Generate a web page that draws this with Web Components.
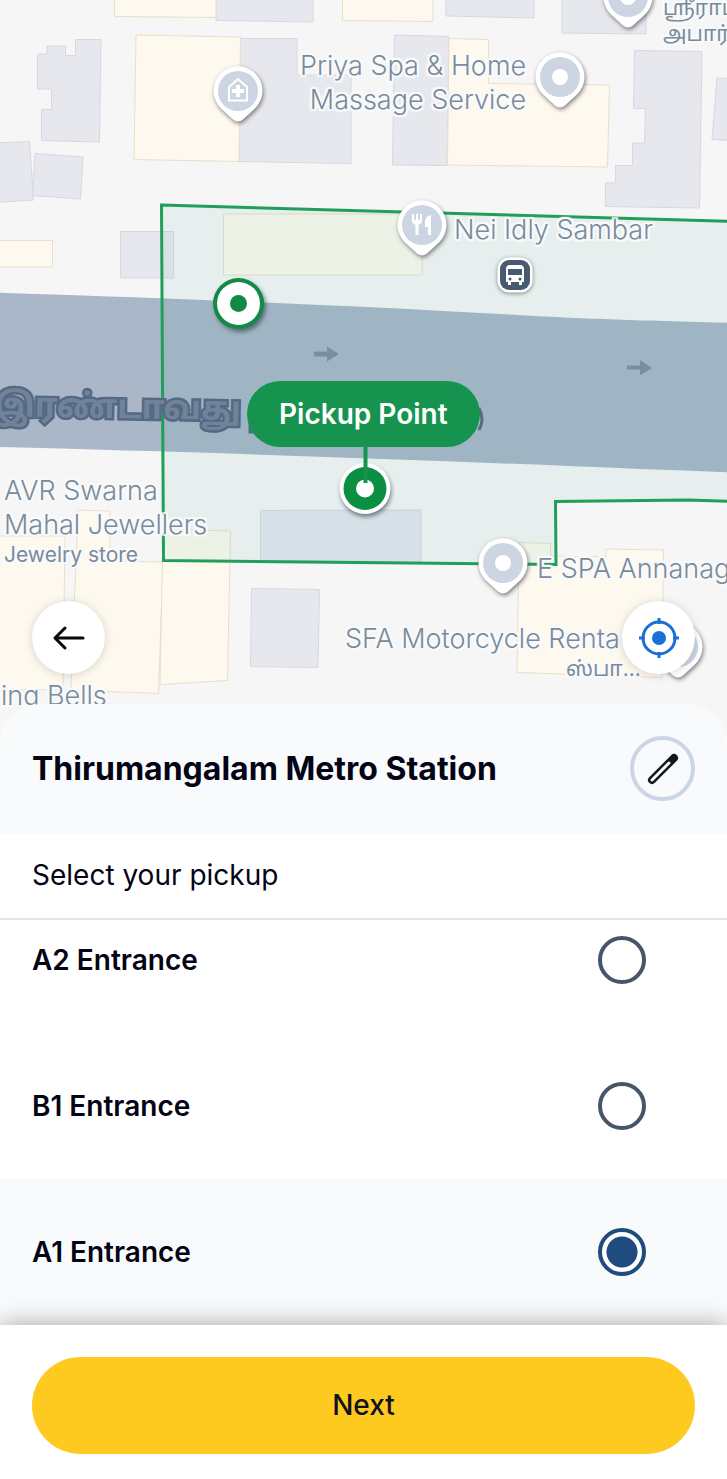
<!DOCTYPE html>
<html lang="en">
<head>
<meta charset="utf-8">
<meta name="viewport" content="width=device-width, initial-scale=1">
<title>Select pickup</title>
<style>
  body {
    margin: 0;
    font-family: Inter, "Noto Sans", "Noto Sans Tamil", sans-serif;
    color: #040415;
    background: #fff;
  }
</style>
</head>
<body>
<pickup-screen></pickup-screen>

<script>
// One place marker on the map, anchored at the centre of its disc
class MapPin extends HTMLElement {
  constructor() {
    super();
    const glyphs = {
      dot: `<circle r="8" fill="#fff"/>`,
      clinic: `
        <path d="M-9 9.500V-4L0-12L9-4V9.500Z" fill="none" stroke="#fff" stroke-width="2"/>
        <path d="M-2-6H2V-2H6V2H2V6H-2V2H-6V-2H-2Z" fill="#fff"/>`,
      food: `
        <path d="M-10-11V-5Q-10-2-8-1L-6.500 0V10H-3.500V0L-2-1Q0-2 0-5V-11H-2V-5H-4V-11H-6V-5H-8V-11Z" fill="#fff"/>
        <path d="M9-10V10H6V2H3V-4Q4-9 9-10Z" fill="#fff"/>`,
    };
    this.attachShadow({ mode: "open" }).innerHTML = `
      <style>
        :host { position: absolute; }
        svg { display: block; margin: -30px 0 0 -32px; filter: drop-shadow(1px 2px 2px rgba(60, 60, 60, .65)); }
      </style>
      <svg width="64" height="72" viewBox="-32 -30 64 72" aria-hidden="true">
        <path d="M-17 17.500A24.500 24.500 0 1 1 17 17.500L5 28.500Q0 32.500-5 28.500Z" fill="#fff"/>
        <circle r="20" fill="#cdd5e3"/>
        ${glyphs[this.getAttribute("kind")] || glyphs.dot}
      </svg>`;
    this.style.left = this.getAttribute("x") + "px";
    this.style.top = this.getAttribute("y") + "px";
  }
}

// Place name with the pale halo used on map text
class MapLabel extends HTMLElement {
  constructor() {
    super();
    this.attachShadow({ mode: "open" }).innerHTML = `
      <style>
        :host {
          position: absolute;
          font-size: 27px;
          font-weight: 350;
          line-height: 34px;
          color: #7a8a9d;
          white-space: nowrap;
          text-shadow: 2px 0 1px #f8fafa, -2px 0 1px #f8fafa, 0 2px 1px #f8fafa, 0 -2px 1px #f8fafa,
            2px 2px 1px #f8fafa, -2px -2px 1px #f8fafa, 2px -2px 1px #f8fafa, -2px 2px 1px #f8fafa;
        }
        :host([align="right"]) { text-align: right; }
        ::slotted(small) { display: block; font-size: 21px; font-weight: 400; line-height: 26px; }
      </style>
      <slot></slot>`;
    this.style.left = this.getAttribute("x") + "px";
    this.style.top = this.getAttribute("y") + "px";
  }
}

// White floating button over the map
class RoundButton extends HTMLElement {
  constructor() {
    super();
    this.attachShadow({ mode: "open" }).innerHTML = `
      <style>
        :host { display: block; }
        button {
          display: grid;
          place-items: center;
          width: 73px;
          height: 73px;
          padding: 0;
          border: 0;
          border-radius: 50%;
          background: #fff;
          box-shadow: 0 1px 10px rgba(0, 0, 0, .16);
        }
      </style>
      <button type="button" aria-label="${this.getAttribute("label")}"><slot></slot></button>`;
  }
}

class PickupMap extends HTMLElement {
  constructor() {
    super();
    this.attachShadow({ mode: "open" }).innerHTML = `
      <style>
        :host { display: block; position: relative; overflow: hidden; background: #f6f6f7; }
        .ground { display: block; position: absolute; left: 0; top: 0; }
        .road { font-size: 33px; font-weight: 700; fill: #71839b; stroke: #566982; stroke-width: 5px; paint-order: stroke; }
        .tag {
          position: absolute;
          left: 247px;
          top: 381px;
          padding: 16px 32px;
          border-radius: 33px;
          background: #16944f;
          color: #fff;
          font-size: 28px;
          font-weight: 600;
          line-height: 34px;
          white-space: nowrap;
        }
        .controls {
          position: absolute;
          left: 32px;
          right: 32px;
          bottom: 62px;
          display: flex;
          justify-content: space-between;
        }
      </style>
      <svg class="ground" width="1200" height="760" viewBox="0 0 1200 760">
        <!-- buildings -->
        <g fill="#e7e8ed" stroke="#d6d8e3">
          <path d="M216-5H313V22L216 20.500Z"/>
          <path d="M446-5H534V18L446 16Z"/>
          <path d="M562-5H646V34L562 33Z"/>
          <path d="M75.500 39.500H101L99.500 142L41.500 140.500V109.500H51.500V89H37.500V54H47V46H65.500V55.500H75.500Z"/>
          <path d="M-5 143L29.500 141.500L33.500 200L-5 202.500Z"/>
          <path d="M35 153.500L83 157L80.500 199L32.500 195.500Z"/>
          <path d="M240 38.500H297V75H351V163.500L239 161.500Z"/>
          <path d="M394.500 35L449 36.500L447 165.500L392.500 165Z"/>
          <path d="M634.500 50.500L702 51.500L699.500 208L605.500 206.500V183H615.500V165.500H632.500V143H644.500L645.500 108.500H633.500Z"/>
          <path d="M717 78L740 79V141L712 139.500Z"/>
          <path d="M120.500 231.500H173.500V278H120.500Z"/>
          <path d="M260.500 510.500L421 510V562L260.500 560.500Z" fill="#e3e6ee"/>
          <path d="M251.500 588.500L319.500 589.500L318 667.500L250.500 666.500Z"/>
        </g>
        <g fill="#fdf9ef" stroke="#e9dfca">
          <path d="M114.500-5H216V17.500L114.500 16.500Z"/>
          <path d="M342.500-5H433V21.500L342.500 20.500Z"/>
          <path d="M136 35L240.500 37L239 161.500L134 159.500Z"/>
          <path d="M449 38.500L488.500 39.500V83.500L609.500 85L607.500 167L447.500 165Z"/>
          <path d="M-5 240.500H52.500V267H-5Z"/>
          <path d="M223.500 214H422V275H223.500Z"/>
          <path d="M-5 536H65L63 690H-5Z"/>
          <path d="M78 510L110 511V561L163 562L158.500 693.500L71 690Z"/>
          <path d="M163 529L230.500 531L227.500 680.500L160 684.500Z"/>
          <path d="M519 542.500L550.500 543.500V556L606 557V549L663.500 550L662 677.500L517 672.500Z"/>
        </g>
        <!-- road -->
        <path d="M-5 292.500C200 299 360 306 500 314S650 320 1200 335V483C950 480 800 475 640 469C430 460 200 452-5 447Z" fill="#a9b7c9"/>
        <path d="M314 351.500H327V346.500L339 354L327 361.500V356.500H314ZM627 365.500H640V360L652 368L640 375.500V369.500H627Z" fill="#7f8da3"/>
        <!-- pickup zone -->
        <path d="M161.500 205L1200 235V515L688 500L555.500 501.500L556 564.500L163.500 560.500Z" fill="#2eab86" fill-opacity=".08"/>
        <path d="M161.500 205L1200 235V515L688 500L555.500 501.500L556 564.500L163.500 560.500Z" fill="none" stroke="#219e5a" stroke-width="3"/>
        <text class="road" x="-6" y="416" transform="rotate(1 0 416)">இரண்டாவது</text>
        <path d="M250 420V432H256M479 408Q485 420 479 430" fill="none" stroke="#566982" stroke-width="3"/>
        <!-- bus stop -->
        <g filter="drop-shadow(0 1px 2px rgba(60, 60, 60, .6))">
          <rect x="497.500" y="257.500" width="35" height="35" rx="12" fill="#fff"/>
        </g>
        <rect x="500" y="260" width="30" height="30" rx="9" fill="#475a70"/>
        <path d="M510 265H520Q524 265 524 269V282H522V285H519V282H511V285H508V282H506V269Q506 265 510 265Z" fill="#fff"/>
        <path d="M508 269H522V275H508Z" fill="#475a70"/>
        <circle cx="510" cy="279" r="1.500" fill="#475a70"/>
        <circle cx="520" cy="279" r="1.500" fill="#475a70"/>
        <!-- unselected pickup spot -->
        <g filter="drop-shadow(2px 3px 2px rgba(40, 60, 70, .6))">
          <circle cx="238.500" cy="303.500" r="25.500" fill="#128a45"/>
        </g>
        <circle cx="238.500" cy="303.500" r="21.500" fill="#fff"/>
        <circle cx="238.500" cy="303.500" r="8.500" fill="#128a45"/>
        <!-- selected pickup spot -->
        <g filter="drop-shadow(1px 3px 2px rgba(40, 60, 70, .6))">
          <circle cx="365" cy="488.500" r="25.500" fill="#fff"/>
        </g>
        <circle cx="365" cy="488.500" r="21.500" fill="#0c8f43"/>
        <circle cx="365" cy="488.500" r="9" fill="#fff"/>
        <path d="M365.500 440V483" stroke="#16944f" stroke-width="4"/>
      </svg>

      <map-label x="300" y="49" align="right">Priya Spa &amp; Home<br>Massage Service</map-label>
      <map-label x="454" y="213">Nei Idly Sambar</map-label>
      <map-label x="4" y="474">AVR Swarna<br>Mahal Jewellers<small>Jewelry store</small></map-label>
      <map-label x="537" y="552">E SPA Annanagar</map-label>
      <map-label x="345" y="622">SFA Motorcycle Renta</map-label>
      <map-label x="566" y="656"><small>ஸ்பா...</small></map-label>
      <map-label x="1" y="679">ing Bells</map-label>
      <map-label x="663" y="-5"><small>ஸ்ரீராம்</small><small>அபார்ட்</small></map-label>

      <map-pin kind="clinic" x="238" y="91"></map-pin>
      <map-pin x="560" y="77"></map-pin>
      <map-pin x="628" y="-3"></map-pin>
      <map-pin kind="food" x="422" y="225"></map-pin>
      <map-pin x="503" y="563"></map-pin>
      <map-pin x="678" y="647"></map-pin>

      <div class="tag">Pickup Point</div>

      <div class="controls">
        <round-button label="Back">
          <svg width="40" height="40" viewBox="-20 -20 40 40" fill="none" stroke="#08080f" stroke-width="3" stroke-linecap="round" stroke-linejoin="round">
            <path d="M14 0H-14M-4-10L-14 0L-4 10"/>
          </svg>
        </round-button>
        <round-button label="Use my location">
          <svg width="44" height="44" viewBox="-22 -22 44 44" fill="none" stroke="#1a6fd6" stroke-width="3">
            <circle r="16"/>
            <path d="M0-20V-14M0 14V20M-20 0H-14M14 0H20"/>
            <circle r="7" fill="#1a6fd6" stroke="none"/>
          </svg>
        </round-button>
      </div>`;
  }
}

// A selectable entrance; the whole row is the radio's label
class PickupOption extends HTMLElement {
  constructor() {
    super();
    const checked = this.hasAttribute("checked") ? "checked" : "";
    this.attachShadow({ mode: "open" }).innerHTML = `
      <style>
        :host { display: block; flex: none; }
        :host([checked]) { background: #f8fafc; }
        label {
          display: flex;
          align-items: center;
          justify-content: space-between;
          padding: 49px 81px 49px 32px;
          font-size: 28px;
          font-weight: 600;
        }
        input {
          appearance: none;
          width: 48px;
          height: 48px;
          margin: 0;
          border: 4px solid #475569;
          border-radius: 50%;
          background: #fff;
        }
        input:checked {
          border-color: #1f4b7f;
          background: radial-gradient(circle, #1f4b7f 15px, #fff 16px);
        }
      </style>
      <label><slot></slot><input type="radio" name="pickup" ${checked}></label>`;
    this.input = this.shadowRoot.querySelector("input");
    this.input.addEventListener("change", this.select.bind(this));
  }

  select() {
    for (const option of this.parentNode.querySelectorAll("pickup-option")) {
      option.toggleAttribute("checked", option === this);
      option.input.checked = option === this;
    }
  }
}

class StationHeader extends HTMLElement {
  constructor() {
    super();
    this.attachShadow({ mode: "open" }).innerHTML = `
      <style>
        :host {
          display: flex;
          align-items: center;
          justify-content: space-between;
          padding: 32px;
          border-radius: 40px 40px 0 0;
          background: #f8fafc;
        }
        h1 { margin: 0; font-size: 32px; font-weight: 700; line-height: 40px; }
        button {
          display: grid;
          place-items: center;
          width: 65px;
          height: 65px;
          padding: 0;
          border: 4px solid #cbd5e4;
          border-radius: 50%;
          background: none;
        }
      </style>
      <h1><slot></slot></h1>
      <button type="button" aria-label="Edit location">
        <svg width="36" height="36" viewBox="-18 -18 36 36" fill="none" stroke-linecap="round">
          <path d="M-11 11L11-11" stroke="#15151c" stroke-width="8"/>
          <path d="M-11 11L6-6" stroke="#f8fafc" stroke-width="3"/>
        </svg>
      </button>`;
  }
}

class PickupScreen extends HTMLElement {
  constructor() {
    super();
    this.attachShadow({ mode: "open" }).innerHTML = `
      <style>
        :host { display: flex; flex-direction: column; height: 100vh; }
        pickup-map { flex: 1; }
        station-header { position: relative; margin-top: -32px; }
        h2 {
          margin: 0;
          padding: 26px 32px;
          border-bottom: 2px solid #e4e5e8;
          font-size: 28px;
          font-weight: 400;
          line-height: 33px;
        }
        .options { display: flex; flex-direction: column; height: 405px; overflow-y: auto; scrollbar-width: none; }
        footer { position: relative; padding: 32px 32px 25px; background: #fff; box-shadow: 0 0 24px rgba(0, 0, 0, .35); }
        .next {
          display: block;
          width: 100%;
          padding: 32px;
          border: 0;
          border-radius: 49px;
          background: #ffca20;
          color: #12121a;
          font: 500 28px/33px Inter, sans-serif;
        }
      </style>
      <pickup-map></pickup-map>
      <station-header>Thirumangalam Metro Station</station-header>
      <h2>Select your pickup</h2>
      <div class="options" role="radiogroup" aria-label="Select your pickup">
        <pickup-option>A2 Entrance</pickup-option>
        <pickup-option>B1 Entrance</pickup-option>
        <pickup-option checked>A1 Entrance</pickup-option>
      </div>
      <footer><button class="next" type="button">Next</button></footer>`;
  }

  connectedCallback() {
    const options = this.shadowRoot.querySelector(".options");
    options.scrollTop = options.scrollHeight;
  }
}

customElements.define("map-pin", MapPin);
customElements.define("map-label", MapLabel);
customElements.define("round-button", RoundButton);
customElements.define("pickup-map", PickupMap);
customElements.define("pickup-option", PickupOption);
customElements.define("station-header", StationHeader);
customElements.define("pickup-screen", PickupScreen);
</script>
</body>
</html>
